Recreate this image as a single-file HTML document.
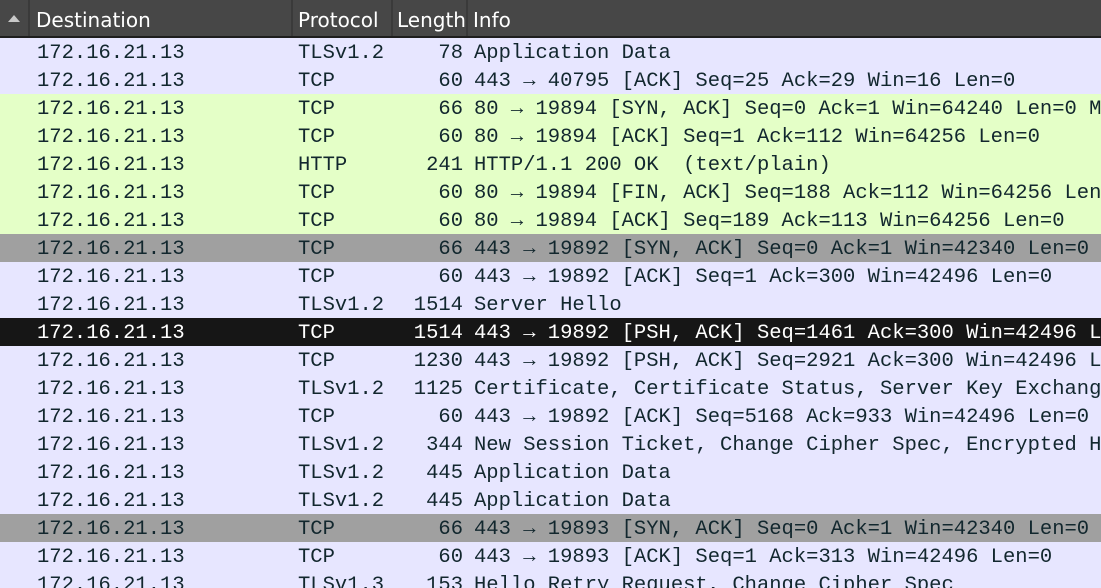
<!DOCTYPE html>
<html style="overflow:hidden"><head><meta charset="utf-8"><style>
*{margin:0;padding:0;box-sizing:border-box}
html,body{width:1101px;height:588px;overflow:hidden}
body{background:#e7e6ff;position:relative}
.hdr{position:absolute;left:0;top:0;width:1101px;height:38px;background:#474747;border-bottom:2px solid #1e1e1e;font-family:"DejaVu Sans","Liberation Sans",sans-serif;font-size:20px;color:#fff}
.hdr span{position:absolute;top:8px}
.sep{position:absolute;top:0;width:2px;height:36px;background:#3a3a3a}
.tri{position:absolute;left:8px;top:15px;width:0;height:0;border-left:6px solid transparent;border-right:6px solid transparent;border-bottom:7px solid #c8c8c8}
.r{position:absolute;left:0;width:1101px;height:28px;overflow:hidden;font-family:"Liberation Mono",monospace;font-size:20.5px;line-height:28px;color:#12272e;white-space:pre}
.r span{position:absolute;top:2px}
.d{left:37px}.p{left:298px}.l{right:638px;text-align:right}.i{left:474px}
.L{background:#e7e6ff}.G{background:#e4ffc7}.Y{background:#a0a0a0}.B{background:#161616;color:#fff}
</style></head><body>
<div class="hdr">
<div class="tri"></div>
<div class="sep" style="left:28px"></div>
<span style="left:36px">Destination</span>
<div class="sep" style="left:291px"></div>
<span style="left:298px">Protocol</span>
<div class="sep" style="left:391px"></div>
<span style="left:397px">Length</span>
<div class="sep" style="left:466px"></div>
<span style="left:473px">Info</span>
</div>
<div class="r L" style="top:38px"><span class="d">172.16.21.13</span><span class="p">TLSv1.2</span><span class="l">78</span><span class="i">Application Data</span></div>
<div class="r L" style="top:66px"><span class="d">172.16.21.13</span><span class="p">TCP</span><span class="l">60</span><span class="i">443 → 40795 [ACK] Seq=25 Ack=29 Win=16 Len=0</span></div>
<div class="r G" style="top:94px"><span class="d">172.16.21.13</span><span class="p">TCP</span><span class="l">66</span><span class="i">80 → 19894 [SYN, ACK] Seq=0 Ack=1 Win=64240 Len=0 MSS</span></div>
<div class="r G" style="top:122px"><span class="d">172.16.21.13</span><span class="p">TCP</span><span class="l">60</span><span class="i">80 → 19894 [ACK] Seq=1 Ack=112 Win=64256 Len=0</span></div>
<div class="r G" style="top:150px"><span class="d">172.16.21.13</span><span class="p">HTTP</span><span class="l">241</span><span class="i">HTTP/1.1 200 OK  (text/plain)</span></div>
<div class="r G" style="top:178px"><span class="d">172.16.21.13</span><span class="p">TCP</span><span class="l">60</span><span class="i">80 → 19894 [FIN, ACK] Seq=188 Ack=112 Win=64256 Len=0</span></div>
<div class="r G" style="top:206px"><span class="d">172.16.21.13</span><span class="p">TCP</span><span class="l">60</span><span class="i">80 → 19894 [ACK] Seq=189 Ack=113 Win=64256 Len=0</span></div>
<div class="r Y" style="top:234px"><span class="d">172.16.21.13</span><span class="p">TCP</span><span class="l">66</span><span class="i">443 → 19892 [SYN, ACK] Seq=0 Ack=1 Win=42340 Len=0 MSS</span></div>
<div class="r L" style="top:262px"><span class="d">172.16.21.13</span><span class="p">TCP</span><span class="l">60</span><span class="i">443 → 19892 [ACK] Seq=1 Ack=300 Win=42496 Len=0</span></div>
<div class="r L" style="top:290px"><span class="d">172.16.21.13</span><span class="p">TLSv1.2</span><span class="l">1514</span><span class="i">Server Hello</span></div>
<div class="r B" style="top:318px"><span class="d">172.16.21.13</span><span class="p">TCP</span><span class="l">1514</span><span class="i">443 → 19892 [PSH, ACK] Seq=1461 Ack=300 Win=42496 Len</span></div>
<div class="r L" style="top:346px"><span class="d">172.16.21.13</span><span class="p">TCP</span><span class="l">1230</span><span class="i">443 → 19892 [PSH, ACK] Seq=2921 Ack=300 Win=42496 Len</span></div>
<div class="r L" style="top:374px"><span class="d">172.16.21.13</span><span class="p">TLSv1.2</span><span class="l">1125</span><span class="i">Certificate, Certificate Status, Server Key Exchange</span></div>
<div class="r L" style="top:402px"><span class="d">172.16.21.13</span><span class="p">TCP</span><span class="l">60</span><span class="i">443 → 19892 [ACK] Seq=5168 Ack=933 Win=42496 Len=0</span></div>
<div class="r L" style="top:430px"><span class="d">172.16.21.13</span><span class="p">TLSv1.2</span><span class="l">344</span><span class="i">New Session Ticket, Change Cipher Spec, Encrypted Hand</span></div>
<div class="r L" style="top:458px"><span class="d">172.16.21.13</span><span class="p">TLSv1.2</span><span class="l">445</span><span class="i">Application Data</span></div>
<div class="r L" style="top:486px"><span class="d">172.16.21.13</span><span class="p">TLSv1.2</span><span class="l">445</span><span class="i">Application Data</span></div>
<div class="r Y" style="top:514px"><span class="d">172.16.21.13</span><span class="p">TCP</span><span class="l">66</span><span class="i">443 → 19893 [SYN, ACK] Seq=0 Ack=1 Win=42340 Len=0 MSS</span></div>
<div class="r L" style="top:542px"><span class="d">172.16.21.13</span><span class="p">TCP</span><span class="l">60</span><span class="i">443 → 19893 [ACK] Seq=1 Ack=313 Win=42496 Len=0</span></div>
<div class="r L" style="top:570px;height:18px"><span class="d">172.16.21.13</span><span class="p">TLSv1.3</span><span class="l">153</span><span class="i">Hello Retry Request, Change Cipher Spec</span></div>
</body></html>
